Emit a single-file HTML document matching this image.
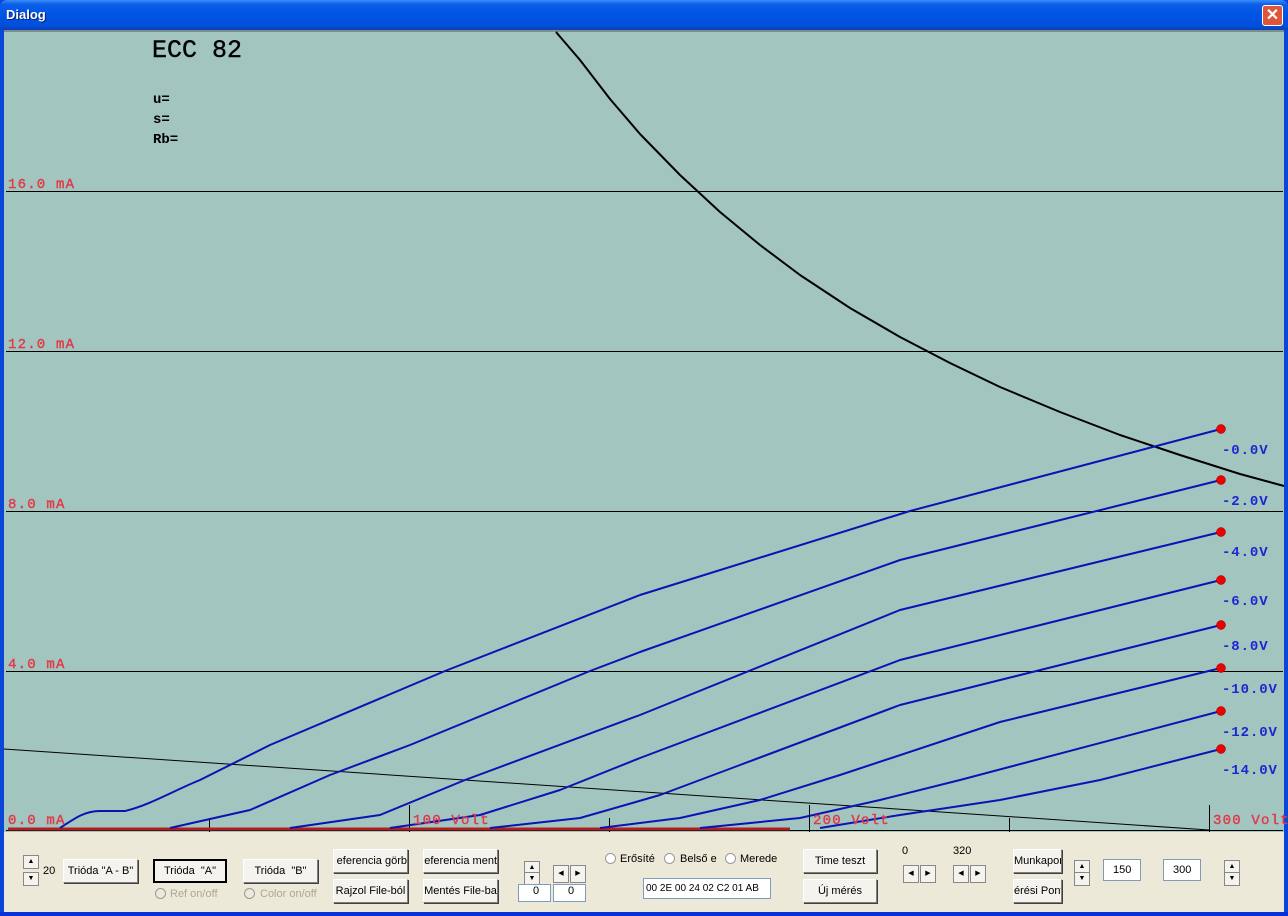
<!DOCTYPE html>
<html><head><meta charset="utf-8"><style>
*{margin:0;padding:0;box-sizing:border-box}
body{width:1288px;height:916px;overflow:hidden;background:#0a46d8;font-family:Tahoma,"Liberation Sans",sans-serif;position:relative}
#title{position:absolute;left:0;top:0;width:1288px;height:30px;background:linear-gradient(#3a8cf8 0%,#0a5ee8 15%,#0054e3 50%,#0150dc 85%,#0a3fb8 100%);border-radius:7px 7px 0 0}
#title span{position:absolute;left:6px;top:7px;color:#fff;font:bold 13px "Liberation Sans",sans-serif;text-shadow:1px 1px #0a1e6e}
#close{position:absolute;left:1262px;top:5px;width:21px;height:21px;background:#e0553a;border:1px solid #fff;border-radius:3px;color:#fff;font:bold 16px "Liberation Sans",sans-serif;text-align:center;line-height:19px}
#client{position:absolute;left:4px;top:30px;width:1280px;height:882px;background:#ece9d8}
svg{position:absolute;left:0;top:0}
.btn{position:absolute;background:#f4f3ee;border:1px solid #7f7f7f;border-top-color:#fff;border-left-color:#fff;box-shadow:1px 1px 0 #404040;font-size:11px;color:#000;text-align:center;white-space:nowrap;overflow:hidden;font-family:"Liberation Sans",sans-serif}
.lbl{position:absolute;font-size:11px;font-family:"Liberation Sans",sans-serif;white-space:nowrap}
.edit{position:absolute;background:#fff;border:1px solid #7f9db9;font-size:11px;font-family:"Liberation Sans",sans-serif;padding-left:3px;white-space:nowrap;overflow:hidden}
.sb{position:absolute;width:16px;height:14px;background:#f4f3ee;border:1px solid #888;font-size:7px;text-align:center;line-height:12px}
.rad{position:absolute;width:11px;height:11px;border:1px solid #999;border-radius:50%;background:#fff}
</style></head><body>
<div id="title"><span>Dialog</span><div id="close">✕</div></div>
<div id="client"></div>
<svg width="1288" height="916">
<rect x="4" y="30" width="1280" height="802" fill="#a3c5bf"/>
<line x1="4" y1="31" x2="1284" y2="31" stroke="#555" stroke-width="1"/>
<g stroke="#000" stroke-width="1">
<line x1="6" y1="191.5" x2="1283" y2="191.5"/><line x1="6" y1="351.5" x2="1283" y2="351.5"/>
<line x1="6" y1="511.5" x2="1283" y2="511.5"/><line x1="6" y1="671.5" x2="1283" y2="671.5"/>
<line x1="6" y1="830.5" x2="1283" y2="830.5"/>
<line x1="209.5" y1="818" x2="209.5" y2="832"/><line x1="609.5" y1="818" x2="609.5" y2="832"/><line x1="1009.5" y1="818" x2="1009.5" y2="832"/>
<line x1="409.5" y1="805" x2="409.5" y2="832"/><line x1="809.5" y1="805" x2="809.5" y2="832"/><line x1="1209.5" y1="805" x2="1209.5" y2="832"/>
<line x1="4" y1="749" x2="1209" y2="830"/>
</g>
<polyline points="556,32 580,60 610,99 640,134 680,175 720,212 760,245 800,275 850,308 900,337 950,363 1000,387 1060,412 1120,435 1180,455 1240,474 1284,486" fill="none" stroke="#000" stroke-width="2" stroke-linejoin="round"/>
<line x1="8" y1="829" x2="790" y2="829" stroke="#b02020" stroke-width="3"/>
<g fill="none" stroke="#0a14b4" stroke-width="2" stroke-linejoin="round">
<path d="M60,828 C75,818 85,811 100,811 L125,811 C150,805 175,790 200,780 L270,745 L445,671 L640,595 L910,511 L1221,429"/>
<path d="M170,828 L250,810 L330,775 L410,745 L590,671 L640,652 L900,560 L1221,480"/>
<path d="M290,828 L380,815 L465,780 L640,715 L900,610 L1221,532"/>
<path d="M390,828 L480,815 L560,790 L640,758 L900,660 L1221,580"/>
<path d="M490,828 L580,818 L660,795 L740,765 L900,705 L1221,625"/>
<path d="M600,828 L680,818 L760,800 L840,775 L1000,722 L1221,668"/>
<path d="M700,828 L800,818 L880,800 L960,780 L1221,711"/>
<path d="M820,828 L900,815 L1000,800 L1100,780 L1221,749"/>
</g>
<g fill="#e00" stroke="#800" stroke-width="0.5">
<circle cx="1221" cy="429" r="4.5"/><circle cx="1221" cy="480" r="4.5"/><circle cx="1221" cy="532" r="4.5"/><circle cx="1221" cy="580" r="4.5"/>
<circle cx="1221" cy="625" r="4.5"/><circle cx="1221" cy="668" r="4.5"/><circle cx="1221" cy="711" r="4.5"/><circle cx="1221" cy="749" r="4.5"/>
</g>
<g font-family="Liberation Mono,monospace" font-size="14" fill="#e03a4a" stroke="#e03a4a" stroke-width="0.4" letter-spacing="1.2">
<text x="8" y="188">16.0 mA</text><text x="8" y="348">12.0 mA</text><text x="8" y="508">8.0 mA</text><text x="8" y="668">4.0 mA</text><text x="8" y="824">0.0 mA</text>
<text x="413" y="824">100 Volt</text><text x="813" y="824">200 Volt</text><text x="1213" y="824">300 Volt</text>
</g>
<g font-family="Liberation Mono,monospace" font-size="14" font-weight="bold" fill="#1a28d0" letter-spacing="0.9">
<text x="1222" y="454">-0.0V</text><text x="1222" y="505">-2.0V</text><text x="1222" y="556">-4.0V</text><text x="1222" y="605">-6.0V</text>
<text x="1222" y="650">-8.0V</text><text x="1222" y="693">-10.0V</text><text x="1222" y="736">-12.0V</text><text x="1222" y="774">-14.0V</text>
</g>
<text x="152" y="57" font-family="Liberation Mono,monospace" font-size="25" fill="#000" stroke="#000" stroke-width="0.4">ECC 82</text>
<g font-family="Liberation Mono,monospace" font-size="14" font-weight="bold" fill="#000">
<text x="153" y="103">u=</text><text x="153" y="123">s=</text><text x="153" y="143">Rb=</text>
</g>
<rect x="0" y="912" width="1288" height="4" fill="#0831d9"/>
</svg>
<div class="sb" style="left:23px;top:855px">▲</div><div class="sb" style="left:23px;top:872px">▼</div>
<div class="lbl" style="left:43px;top:865px">20</div>
<div class="btn" style="left:63px;top:859px;width:75px;height:24px;line-height:22px">Trióda "A - B"</div>
<div class="btn" style="left:153px;top:859px;width:74px;height:24px;line-height:20px;border:2px solid #000;box-shadow:none">Trióda &nbsp;"A"</div>
<div class="btn" style="left:243px;top:859px;width:75px;height:24px;line-height:22px">Trióda &nbsp;"B"</div>
<div class="rad" style="left:155px;top:888px;background:none"></div><div class="lbl" style="left:170px;top:888px;color:#aca899">Ref on/off</div>
<div class="rad" style="left:244px;top:888px;background:none"></div><div class="lbl" style="left:260px;top:888px;color:#aca899">Color on/off</div>
<div class="btn" style="left:333px;top:849px;width:75px;height:24px;line-height:22px;text-align:right">eferencia görb</div>
<div class="btn" style="left:333px;top:879px;width:75px;height:24px;line-height:22px">Rajzol File-ból</div>
<div class="btn" style="left:423px;top:849px;width:75px;height:24px;line-height:22px;text-align:right">eferencia ment</div>
<div class="btn" style="left:423px;top:879px;width:75px;height:24px;line-height:22px">Mentés File-ba</div>
<div class="sb" style="left:524px;top:861px">▲</div><div class="sb" style="left:524px;top:872px">▼</div>
<div class="sb" style="left:553px;top:865px;width:16px;height:18px;line-height:16px">◀</div><div class="sb" style="left:570px;top:865px;width:16px;height:18px;line-height:16px">▶</div>
<div class="edit" style="left:518px;top:884px;width:33px;height:18px;text-align:center">0</div>
<div class="edit" style="left:553px;top:884px;width:33px;height:18px;text-align:center">0</div>
<div class="rad" style="left:605px;top:853px"></div><div class="lbl" style="left:620px;top:853px">Erősíté</div>
<div class="rad" style="left:664px;top:853px"></div><div class="lbl" style="left:680px;top:853px">Belső e</div>
<div class="rad" style="left:725px;top:853px"></div><div class="lbl" style="left:740px;top:853px">Merede</div>
<div class="edit" style="left:643px;top:878px;width:128px;height:21px;line-height:19px;font-size:10px;padding-left:2px">00 2E 00 24 02 C2 01 AB</div>
<div class="btn" style="left:803px;top:849px;width:74px;height:24px;line-height:22px">Time teszt</div>
<div class="btn" style="left:803px;top:879px;width:74px;height:24px;line-height:22px">Új mérés</div>
<div class="lbl" style="left:902px;top:845px">0</div><div class="lbl" style="left:953px;top:845px">320</div>
<div class="sb" style="left:903px;top:865px;width:16px;height:18px;line-height:16px">◀</div><div class="sb" style="left:920px;top:865px;width:16px;height:18px;line-height:16px">▶</div>
<div class="sb" style="left:953px;top:865px;width:16px;height:18px;line-height:16px">◀</div><div class="sb" style="left:970px;top:865px;width:16px;height:18px;line-height:16px">▶</div>
<div class="btn" style="left:1013px;top:849px;width:49px;height:24px;line-height:22px;text-align:right">Munkapon</div>
<div class="btn" style="left:1013px;top:879px;width:49px;height:24px;line-height:22px;text-align:right">érési Pont</div>
<div class="sb" style="left:1074px;top:860px">▲</div><div class="sb" style="left:1074px;top:872px">▼</div>
<div class="edit" style="left:1103px;top:859px;width:38px;height:22px;line-height:20px;padding-left:9px">150</div>
<div class="edit" style="left:1163px;top:859px;width:38px;height:22px;line-height:20px;padding-left:9px">300</div>
<div class="sb" style="left:1224px;top:860px">▲</div><div class="sb" style="left:1224px;top:872px">▼</div>
</body></html>
